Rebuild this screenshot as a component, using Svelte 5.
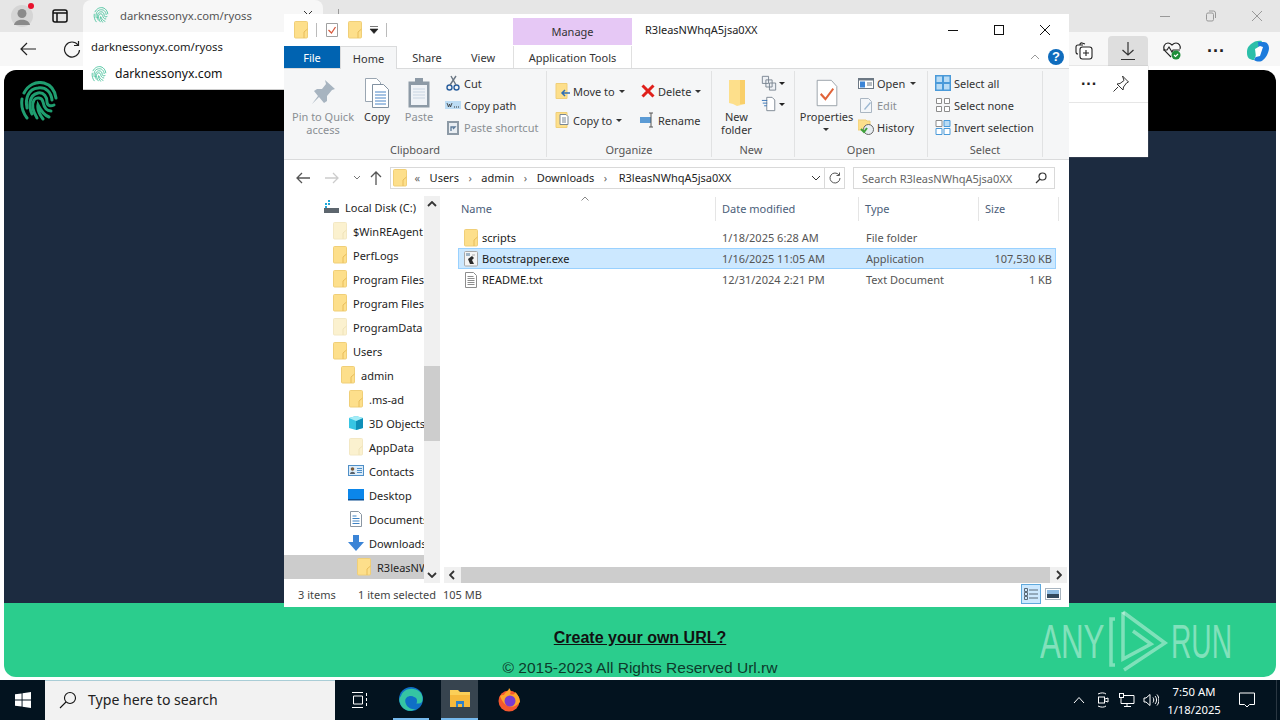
<script>
  const tree = [
    { label: 'Local Disk (C:)', depth: 0, icon: 'disk' },
    { label: '$WinREAgent', depth: 1, icon: 'pale' },
    { label: 'PerfLogs', depth: 1, icon: 'folder' },
    { label: 'Program Files', depth: 1, icon: 'folder' },
    { label: 'Program Files', depth: 1, icon: 'folder' },
    { label: 'ProgramData', depth: 1, icon: 'pale' },
    { label: 'Users', depth: 1, icon: 'folder' },
    { label: 'admin', depth: 2, icon: 'folder' },
    { label: '.ms-ad', depth: 3, icon: 'folder' },
    { label: '3D Objects', depth: 3, icon: 'cube' },
    { label: 'AppData', depth: 3, icon: 'pale' },
    { label: 'Contacts', depth: 3, icon: 'contacts' },
    { label: 'Desktop', depth: 3, icon: 'desktop' },
    { label: 'Documents', depth: 3, icon: 'doc' },
    { label: 'Downloads', depth: 3, icon: 'down' },
    { label: 'R3leasNWhqA5jsa0XX', depth: 4, icon: 'folder', active: true }
  ];

  const files = [
    { name: 'scripts', date: '1/18/2025 6:28 AM', type: 'File folder', size: '', icon: 'folder' },
    { name: 'Bootstrapper.exe', date: '1/16/2025 11:05 AM', type: 'Application', size: '107,530 KB', icon: 'exe', selected: true },
    { name: 'README.txt', date: '12/31/2024 2:21 PM', type: 'Text Document', size: '1 KB', icon: 'txt' }
  ];
</script>

{#snippet folder(pale = false)}
  <svg class="ico" width="16" height="18" viewBox="0 0 16 18">
    <rect x="1.500" y="0.500" width="13" height="16.500" rx="1" fill={pale ? '#fbf1cf' : '#fddf8b'} stroke={pale ? '#f3e8c4' : '#f0cf78'} />
    <path d="M11 17v-6l3.500-3" stroke={pale ? '#efe2b8' : '#e8bd5a'} fill="none" />
  </svg>
{/snippet}

{#snippet icon(name)}
  {#if name === 'folder'}{@render folder()}
  {:else if name === 'pale'}{@render folder(true)}
  {:else if name === 'disk'}
    <svg class="ico" width="16" height="16" viewBox="0 0 16 16"><rect x="0" y="9" width="15" height="5" fill="#5d666e" /><rect x="1" y="4" width="2" height="2" fill="#1fa7d8" /><rect x="4" y="4" width="2" height="2" fill="#1fa7d8" /><rect x="1" y="7" width="2" height="2" fill="#1fa7d8" /><rect x="4" y="1" width="2" height="2" fill="#1fa7d8" /></svg>
  {:else if name === 'cube'}
    <svg class="ico" width="16" height="16" viewBox="0 0 16 16"><path d="M1 3l7-2 7 2v10l-7 2-7-2z" fill="#37c5e3" /><path d="M8 6l7-3v10l-7 2z" fill="#0f8fb8" /><path d="M1 3l7-2 7 2-7 3z" fill="#a5ecf6" /></svg>
  {:else if name === 'contacts'}
    <svg class="ico" width="16" height="16" viewBox="0 0 16 16"><rect x="0.500" y="2.500" width="15" height="10" fill="#dcecf9" stroke="#4f8fc7" /><circle cx="4.500" cy="6" r="1.800" fill="#7a5a3a" /><path d="M2 11c0-3 5-3 5 0z" fill="#55606a" /><path d="M9 5.500h5M9 7.500h5M9 9.500h5" stroke="#4f8fc7" /></svg>
  {:else if name === 'desktop'}
    <svg class="ico" width="16" height="16" viewBox="0 0 16 16"><rect x="0" y="2" width="16" height="11" fill="#0b86ea" /><rect x="0" y="12" width="16" height="1.500" fill="#0c4f91" /></svg>
  {:else if name === 'doc'}
    <svg class="ico" width="16" height="16" viewBox="0 0 16 16"><path d="M2.500 0.500h8l3 3v12h-11z" fill="#fff" stroke="#8a96a2" /><path d="M4.500 5h4M4.500 7.500h7M4.500 10h7M4.500 12.500h7" stroke="#3f83c4" /></svg>
  {:else if name === 'down'}
    <svg class="ico" width="16" height="16" viewBox="0 0 16 16"><path d="M5 0h6v7h5l-8 9-8-9h5z" fill="#3b84d6" /></svg>
  {:else if name === 'exe'}
    <svg class="ico" width="16" height="16" viewBox="0 0 16 16"><rect x="1.500" y="0.500" width="13" height="14.500" rx="1" fill="#f4f4f4" stroke="#a8a8a8" /><rect x="3" y="2" width="4" height="3" fill="#9fb4c6" /><path d="M5 8l4-3 2 2-2 2 2 4H7z" fill="#2c2c2c" /><path d="M9 3h3v2H9z" fill="#d0d0d0" /></svg>
  {:else if name === 'txt'}
    <svg class="ico" width="16" height="16" viewBox="0 0 16 16"><path d="M2.500 0.500h8l3 3v12h-11z" fill="#fff" stroke="#8d8d8d" /><path d="M4.500 4.500h6M4.500 6.500h7M4.500 8.500h7M4.500 10.500h7M4.500 12.500h7" stroke="#8d8d8d" /></svg>
  {/if}
{/snippet}

{#snippet print(size, color = '#1f9e70', weight = 2.5)}
  <svg width={size} height={size} viewBox="0 0 40 40" fill="none" stroke={color} stroke-width={weight} stroke-linecap="round">
    <path d="M5 12C9 4 17 0 25 2c7 2 11 8 12 15" />
    <path d="M3 18c-1 7 1 14 5 19" />
    <path d="M8 27c-2-9 1-19 11-20 8-1 13 4 14 12" />
    <path d="M13 33c-3-6-4-19 6-21 6-1 9 4 9 9 0 3 3 5 7 3" />
    <path d="M18 37c-3-5-6-13-3-18 2-3 8-3 9 2 1 5 3 9 8 9" />
    <path d="M24 38c-3-4-6-9-5-14 3 6 6 10 11 12" />
  </svg>
{/snippet}

<div class="screen">
  <div class="browser">
    <div class="tabbar">
      <div class="profile">
        <svg width="24" height="24" viewBox="0 0 24 24"><circle cx="12" cy="12" r="11" fill="#d5d5d5" /><circle cx="12" cy="9.500" r="4.500" fill="#8a8a8a" /><path d="M4 21c1-7 15-7 16 0z" fill="#8a8a8a" /></svg>
        <span class="dot"></span>
      </div>
      <svg class="tabs-ico" width="16" height="16" viewBox="0 0 16 16" fill="none" stroke="#111" stroke-width="1.500"><rect x="1" y="2" width="14" height="12" rx="2" /><path d="M1 5h14M5 5v9" /></svg>
      <div class="tab">
        {@render print(16, '#5cc9a7')}
        <span>darknessonyx.com/ryoss</span>
        <svg class="tab-x" width="10" height="10" viewBox="0 0 10 10" stroke="#333"><path d="M1 1l8 8M9 1L1 9" /></svg>
      </div>
      <i class="tab-sep"></i>
      <div class="winbtns">
        <svg width="12" height="12" viewBox="0 0 12 12"><path d="M1 6.500h10" stroke="#999" /></svg>
        <svg width="12" height="12" viewBox="0 0 12 12" fill="none" stroke="#999"><rect x="1.500" y="3" width="7" height="8" rx="1.500" /><path d="M4 1h4.500a2 2 0 0 1 2 2v5" /></svg>
        <svg width="12" height="12" viewBox="0 0 12 12" stroke="#999"><path d="M1 1l10 10M11 1L1 11" /></svg>
      </div>
    </div>
    <div class="toolbar">
      <svg class="back" width="18" height="18" viewBox="0 0 18 18" fill="none" stroke="#222" stroke-width="1.200"><path d="M17 9H2M8 3L2 9l6 6" /></svg>
      <svg class="reload" width="18" height="18" viewBox="0 0 18 18" fill="none" stroke="#222" stroke-width="1.200"><path d="M15 5a7.500 7.500 0 1 0 1.500 5" /><path d="M15.500 1v4.500H11" /></svg>
      <div class="tools">
        <span class="tool">
          <svg width="18" height="18" viewBox="0 0 18 18" fill="none" stroke="#222" stroke-width="1.100"><path d="M5 3V2.500A1.500 1.500 0 0 1 7 1l3 1M3 12a2 2 0 0 1-2-2V5a2 2 0 0 1 2-2h5" /><rect x="5" y="5" width="12" height="12" rx="2.500" fill="#fff" /><path d="M11 8v6M8 11h6" /></svg>
        </span>
        <span class="tool">
          <span class="dl">
            <svg width="18" height="20" viewBox="0 0 18 20" fill="none" stroke="#333" stroke-width="1.200"><path d="M9 1v13M3.500 9L9 14l5.500-5M2 18.500h14" /></svg>
          </span>
        </span>
        <span class="tool">
          <svg width="20" height="20" viewBox="0 0 20 20" fill="none" stroke="#222" stroke-width="1.100"><path d="M9 16L3 10C0 6 3 2 6 2c2 0 3 1 4 2 1-1 2-2 4-2 3 0 5 3 4 6" /><path d="M1 9h4l2-3 3 5 1-2h7" /><circle cx="14" cy="14" r="4.500" fill="#1f8f3a" stroke="none" /><path d="M12 14l1.500 1.500L16 13" stroke="#fff" /></svg>
        </span>
        <span class="tool dots">···</span>
        <span class="tool last">
          <svg width="24" height="24" viewBox="0 0 24 24"><path d="M5 5c3-3 8-4 11-3l-4 9-4 10c-4 0-7-2-7-7s1-6 4-9z" fill="#2bbfa9" /><path d="M12 3h6c3 0 5 3 5 6s-2 9-6 12c-2 2-6 2-9 0l5-9z" fill="#1c7bdc" /><path d="M9 10l5-3 3 1-3 9-4 1z" fill="#fff" /></svg>
        </span>
      </div>
    </div>
    <div class="page">
      <header class="site-head">{@render print(40, '#1f9e70', 3)}</header>
      <main class="site-body"></main>
      <footer class="site-foot">
        <a href="#top">Create your own URL?</a>
        <p>© 2015-2023 All Rights Reserved Url.rw</p>
      </footer>
    </div>
    <div class="taskbar">
      <div class="start">
        <svg width="16" height="16" viewBox="0 0 17 17" fill="#fff"><path d="M0 2.500l7-1v6.500H0zM8 1.300L17 0v8H8zM0 9h7v6.500l-7-1zM8 9h9v8l-9-1.300z" /></svg>
      </div>
      <div class="search">
        <svg width="18" height="18" viewBox="0 0 18 18" fill="none" stroke="#111" stroke-width="1.100"><circle cx="11" cy="7" r="5.500" /><path d="M7 11l-6 6" /></svg>
        <span>Type here to search</span>
      </div>
      <div class="task first">
        <svg width="16" height="18" viewBox="0 0 16 18" fill="none" stroke="#fff"><path d="M0 1.500h11M0 16.500h11M1.500 5h9v8h-9zM14.500 2v3M14.500 7v3M14.500 12v3" /></svg>
      </div>
      <div class="task running edge">
        <svg width="24" height="24" viewBox="0 0 24 24"><circle cx="12" cy="12" r="12" fill="#0f6fc6" /><path d="M2 9C4 2 14-1 21 5c3 3 3 8 2 10-2 2-6 2-8 0 2-2 1-6-3-6-5 0-7 4-5 8 1 3 5 6 10 5-6 4-14 1-16-6-1-2-1-5 1-7z" fill="#35c4a3" /><circle cx="14" cy="14" r="4" fill="#0f6fc6" /></svg>
      </div>
      <div class="task running active">
        <svg width="22" height="20" viewBox="0 0 22 20"><path d="M1 1h8l2 2h10v15H1z" fill="#fbcf58" /><path d="M1 6h20v12H1z" fill="#f6b93c" /><path d="M7 12h8v6h-2v-3H9v3H7z" fill="#2f80c9" /></svg>
      </div>
      <div class="task">
        <svg width="24" height="24" viewBox="0 0 24 24"><circle cx="12" cy="13" r="10.500" fill="#f5582f" /><path d="M3 8c4 12 14 14 20 6 0-5-3-8-5-10 0 3-3 3-5 2 1-2 1-4-1-6 0 3-4 4-5 7-2 0-3 0-4 1z" fill="#ffa52b" /><circle cx="13" cy="13" r="5.500" fill="#7a3bd1" /></svg>
      </div>
      <div class="tray">
        <span class="ti"><svg width="12" height="8" viewBox="0 0 12 8" fill="none" stroke="#fff"><path d="M1 7l5-5.500L11 7" /></svg></span>
        <span class="ti"><svg width="14" height="16" viewBox="0 0 14 16" fill="none" stroke="#fff"><rect x="2.500" y="5" width="6" height="6" /><path d="M9 7l3-1v4l-3-1M2 2c3-1.500 6-1.500 8 0M2 14c3 1.500 6 1.500 8 0" /></svg></span>
        <span class="ti"><svg width="16" height="14" viewBox="0 0 16 14" fill="none" stroke="#fff"><path d="M2 2.500h13v8H2zM8 10.500V13M5 13.500h7" /><rect x="0.500" y="0.500" width="4" height="4" fill="#03131f" /></svg></span>
        <span class="ti"><svg width="16" height="14" viewBox="0 0 16 14" fill="none" stroke="#fff"><path d="M1 5h2l4-3.500v11L3 9H1zM10 4.500c1 1.500 1 3.500 0 5M12 3c2 2 2 6 0 8M14 1.500c2.500 3 2.500 8 0 11" /></svg></span>
        <div class="clock"><span>7:50 AM</span><span>1/18/2025</span></div>
        <svg class="notif" width="16" height="16" viewBox="0 0 16 16" fill="none" stroke="#fff"><path d="M0.500 1h15v11.500h-5L8 15l-2.500-2.500h-5z" /></svg>
        <i class="peek"></i>
      </div>
    </div>
  </div>

  <div class="omnibox">
    <p class="url">darknessonyx.com/ryoss</p>
    <p class="site">{@render print(16, '#5cc9a7')}<span>darknessonyx.com</span></p>
  </div>

  <div class="dl-popup">
    <div class="dl-head">
      <span class="dots small">···</span>
      <svg width="18" height="18" viewBox="0 0 18 18" fill="none" stroke="#333"><path d="M10.500 1l6 6-2 1-3 4-.5 3-6-6 3-.5 4-3zM6 12l-4.500 4.500" /></svg>
    </div>
  </div>

  <svg class="watermark" width="200" height="70" viewBox="0 0 200 70">
    <text x="0" y="0" transform="translate(0 51) scale(.98 1.520)">ANY</text>
    <text x="0" y="0" transform="translate(131 51) scale(.88 1.520)">RUN</text>
    <g fill="none" stroke="#fff" stroke-opacity=".4" stroke-width="3.500">
      <path d="M75 12h-4v46h4" />
      <path d="M83 5l42 31-41 27" />
      <path d="M83 5v47l28-15-18-13" />
    </g>
  </svg>

  <section class="explorer">
    <div class="titlebar">
      <div class="qat">
        {@render folder()}
        <i class="sep"></i>
        <svg width="16" height="16" viewBox="0 0 16 16"><path d="M2.500 1.500h11v13h-11z" fill="#fff" stroke="#a0a0a0" /><path d="M4.500 8l3 3 4-6" fill="none" stroke="#d9583b" stroke-width="1.300" /></svg>
        {@render folder()}
        <svg class="qat-drop" width="10" height="8" viewBox="0 0 10 8"><path d="M1 0.500h8M1 3h8L5 7.500z" fill="#222" stroke="#222" stroke-width=".6" /></svg>
        <i class="sep"></i>
      </div>
      <div class="manage">Manage</div>
      <div class="wintitle">R3leasNWhqA5jsa0XX</div>
      <div class="wbtns">
        <svg width="12" height="12" viewBox="0 0 12 12"><path d="M1 6.500h10" stroke="#111" /></svg>
        <svg width="12" height="12" viewBox="0 0 12 12"><rect x="1.500" y="1.500" width="9" height="9" fill="none" stroke="#111" /></svg>
        <svg width="12" height="12" viewBox="0 0 12 12" stroke="#111"><path d="M1 1l10 10M11 1L1 11" /></svg>
      </div>
    </div>
    <div class="tabrow">
      <div class="rtab file">File</div>
      <div class="rtab home">Home</div>
      <div class="rtab share">Share</div>
      <div class="rtab view">View</div>
      <div class="rtab apptools">Application Tools</div>
      <div class="tabright">
        <svg width="10" height="6" viewBox="0 0 10 6" fill="none" stroke="#999"><path d="M1 5l4-4 4 4" /></svg>
        <span class="help">?</span>
      </div>
    </div>
    <div class="ribbon">
      <div class="group g-clip">
        <div class="gbody">
          <div class="big pin">
            <svg width="32" height="32" viewBox="0 0 32 32"><path d="M18 3l10 9-3 1-5 6 0 5-3 2-5-6-7 7 6-8-4-5 3-2 5 0 4-5z" fill="#a7b4c0" /></svg>
            <span>Pin to Quick<br />access</span>
          </div>
          <div class="big copy">
            <svg width="26" height="32" viewBox="0 0 26 32"><path d="M1.500 1.500h11l4 4v19h-15z" fill="#fff" stroke="#9aa6b2" /><path d="M8.500 7.500h11l5 5v18h-16z" fill="#fff" stroke="#8191a1" /><path d="M11 15h11M11 18h11M11 21h11M11 24h11M11 27h11" stroke="#4a85c6" /></svg>
            <span>Copy</span>
          </div>
          <div class="big paste">
            <svg width="24" height="32" viewBox="0 0 24 32"><rect x="1.500" y="4.500" width="21" height="26" fill="#8d9aa6" /><rect x="4" y="8" width="16" height="20" fill="#f0f3f7" /><path d="M6 12h12M6 15h12M6 18h12M6 21h12" stroke="#c9d5e2" /><rect x="8" y="1" width="8" height="5" fill="#8d9aa6" /></svg>
            <span>Paste</span>
          </div>
          <div class="smalls">
            <div class="sm"><svg width="16" height="16" viewBox="0 0 16 16" fill="none" stroke="#2a5f9e" stroke-width="1.400"><circle cx="4.500" cy="12.500" r="2.500" /><circle cx="11.500" cy="12.500" r="2.500" /><path d="M5 10L11 1M11 10L6 1" stroke="#6a7683" /></svg>Cut</div>
            <div class="sm"><svg width="16" height="16" viewBox="0 0 16 16"><rect x="0" y="4" width="16" height="8" fill="#bcdcf4" /><path d="M2 6l1.500 4 1-3 1 3L7 6" fill="none" stroke="#333" stroke-width=".8" /><path d="M9 10h1M11 10h1M13 10h1" stroke="#333" /></svg>Copy path</div>
            <div class="sm dim"><svg width="16" height="16" viewBox="0 0 16 16"><rect x="2" y="2" width="12" height="14" fill="#8d9aa6" /><rect x="4" y="4" width="8" height="10" fill="#e9eef3" /><path d="M6 12V8h4L8 10" fill="none" stroke="#5d7b9a" stroke-width="1.300" /></svg>Paste shortcut</div>
          </div>
        </div>
        <div class="glabel">Clipboard</div>
      </div>
      <div class="group g-org">
        <div class="gbody">
          <div class="pair">
            <div class="sm">
              <svg width="16" height="16" viewBox="0 0 16 16"><path d="M1 0.500h11v15H1z" fill="#fddf8b" stroke="#f0cf78" /><path d="M15 10H7M10 7l-3 3 3 3" fill="none" stroke="#2f6fb5" stroke-width="1.500" /></svg>
              Move to <b class="caret"></b>
            </div>
            <div class="sm">
              <svg width="16" height="16" viewBox="0 0 16 16"><path d="M1 0.500h11v15H1z" fill="#fddf8b" stroke="#f0cf78" /><path d="M5 2.500h6l2 2v8H5z" fill="#fff" stroke="#7a8794" /><path d="M7 6h4M7 8h4M7 10h4" stroke="#7a8794" /></svg>
              Copy to <b class="caret"></b>
            </div>
          </div>
          <div class="pair second">
            <div class="sm">
              <svg width="16" height="16" viewBox="0 0 16 16" stroke="#e0201b" stroke-width="3"><path d="M2.500 2.500l11 11M13.500 2.500l-11 11" /></svg>
              Delete <b class="caret"></b>
            </div>
            <div class="sm">
              <svg width="16" height="16" viewBox="0 0 16 16"><rect x="0" y="5" width="11" height="6" fill="#5b9bd5" /><path d="M11 1v14M9 1h4M9 15h4" stroke="#555" fill="none" /></svg>
              Rename
            </div>
          </div>
        </div>
        <div class="glabel">Organize</div>
      </div>
      <div class="group g-new">
        <div class="gbody">
          <div class="big newf">
            <svg width="22" height="28" viewBox="0 0 22 28"><path d="M3 1h16v24l-8 2-4-2-4-1z" fill="#fddf8b" /><path d="M14 1h5v24h-5z" fill="#f9cf6a" /></svg>
            <span>New<br />folder</span>
          </div>
          <div class="newsm">
            <span><svg width="16" height="18" viewBox="0 0 18 18" fill="#eef1f5" stroke="#75818d"><path d="M1.500 1.500h7v8h-7zM5.500 5.500h7v8h-7zM9.500 9h7v8h-7z" /></svg><b class="caret dark"></b></span>
            <span><svg width="16" height="18" viewBox="0 0 18 18" fill="#fff" stroke="#75818d"><path d="M6.500 1.500h6l3 3v12h-9z" /><path d="M1 5h6M2 8h5M3.500 11h3" stroke="#2f6fb5" /></svg><b class="caret dark"></b></span>
          </div>
        </div>
        <div class="glabel">New</div>
      </div>
      <div class="group g-open">
        <div class="gbody">
          <div class="big props">
            <svg width="22" height="28" viewBox="0 0 28 32" preserveAspectRatio="none"><path d="M1.500 1.500h18l7 7v22h-25z" fill="#fff" stroke="#8a939c" /><path d="M6 17l6 6 10-12" fill="none" stroke="#e1643a" stroke-width="2.600" /></svg>
            <span>Properties</span>
            <b class="caret"></b>
          </div>
          <div class="smalls">
            <div class="sm"><svg width="16" height="16" viewBox="0 0 16 16"><rect x="0.500" y="3.500" width="15" height="10" fill="#fff" stroke="#6c7884" /><rect x="0.500" y="3.500" width="15" height="2" fill="#6c7884" /><rect x="2" y="6.500" width="5" height="6" fill="#3b84d6" /><path d="M9 8h5M9 10h5" stroke="#6c7884" /></svg>Open <b class="caret gap"></b></div>
            <div class="sm dim"><svg width="16" height="16" viewBox="0 0 16 16"><path d="M2.500 1.500h8l3 3v11h-11z" fill="#f3f6f9" stroke="#aab6c2" /><path d="M6 12l6-7 1 1-6 7z" fill="#9cb8d2" /></svg>Edit</div>
            <div class="sm"><svg width="16" height="16" viewBox="0 0 16 16"><path d="M0 1h8l1 1h3v9H0z" fill="#fddf8b" stroke="#f0cf78" /><circle cx="10.500" cy="10.500" r="5" fill="#e8edf1" stroke="#666" /><path d="M3 10l3 3 3-4" stroke="#3da13a" stroke-width="2" fill="none" /></svg>History</div>
          </div>
        </div>
        <div class="glabel">Open</div>
      </div>
      <div class="group g-sel">
        <div class="gbody">
          <div class="smalls">
            <div class="sm"><svg width="16" height="16" viewBox="0 0 16 16"><rect width="16" height="16" fill="#4a9ad9" /><path d="M1.500 1.500h5.500v5.500H1.500zM9 1.500h5.500v5.500H9zM1.500 9h5.500v5.500H1.500zM9 9h5.500v5.500H9z" fill="#b9dcf5" /></svg>Select all</div>
            <div class="sm"><svg width="16" height="16" viewBox="0 0 16 16" fill="#fff" stroke="#8c8c8c"><path d="M1.500 1.500h5v5h-5zM9.500 1.500h5v5h-5zM1.500 9.500h5v5h-5zM9.500 9.500h5v5h-5z" /></svg>Select none</div>
            <div class="sm"><svg width="16" height="16" viewBox="0 0 16 16"><path d="M1 9.500h6v6H1zM9 9.500h6v6H9z" fill="#fff" stroke="#4a9ad9" /><path d="M9 1.500h6v6H9z" fill="#b9dcf5" stroke="#4a9ad9" /><path d="M1 1.500h6v6H1z" fill="#fff" stroke="#8c8c8c" /></svg>Invert selection</div>
          </div>
        </div>
        <div class="glabel">Select</div>
      </div>
    </div>
    <div class="addressrow">
      <svg class="nav" width="14" height="12" viewBox="0 0 14 12" fill="none" stroke="#555" stroke-width="1.300"><path d="M14 6H1M6 1L1 6l5 5" /></svg>
      <svg class="nav" width="14" height="12" viewBox="0 0 14 12" fill="none" stroke="#ccc" stroke-width="1.300"><path d="M0 6h13M8 1l5 5-5 5" /></svg>
      <svg class="nav small" width="8" height="6" viewBox="0 0 8 6" fill="none" stroke="#777"><path d="M1 1l3 3 3-3" /></svg>
      <svg class="nav up" width="12" height="14" viewBox="0 0 12 14" fill="none" stroke="#555" stroke-width="1.300"><path d="M6 14V1M1 6l5-5 5 5" /></svg>
      <div class="address">
        {@render folder()}
        <span class="crumb chev first">«</span>
        <span class="crumb">Users</span><span class="chev">›</span>
        <span class="crumb">admin</span><span class="chev">›</span>
        <span class="crumb">Downloads</span><span class="chev">›</span>
        <span class="crumb last-crumb">R3leasNWhqA5jsa0XX</span>
        <svg class="addr-drop" width="10" height="6" viewBox="0 0 10 6" fill="none" stroke="#333"><path d="M1 1l4 4 4-4" /></svg>
      </div>
      <div class="refresh">
        <svg width="12" height="12" viewBox="0 0 12 12" fill="none" stroke="#555"><path d="M10 3a5 5 0 1 0 1 3M10.500 0.500V3.500H7.500" /></svg>
      </div>
      <div class="searchbox">
        <span>Search R3leasNWhqA5jsa0XX</span>
        <svg width="12" height="12" viewBox="0 0 12 12" fill="none" stroke="#333" stroke-width="1.200"><circle cx="7.500" cy="4.500" r="3.500" /><path d="M5 7l-4 4" /></svg>
      </div>
    </div>
    <div class="content">
      <div class="treewrap">
        <div class="tree">
          {#each tree as t}
            <div class="node" class:active={t.active} style="padding-left: {40 + t.depth * 8}px">
              {@render icon(t.icon)}
              <span>{t.label}</span>
            </div>
          {/each}
        </div>
        <div class="vscroll">
          <svg width="10" height="6" viewBox="0 0 10 6" fill="none" stroke="#333" stroke-width="1.800"><path d="M1 5l4-4 4 4" /></svg>
          <div class="vtrack"><i></i></div>
          <svg width="10" height="6" viewBox="0 0 10 6" fill="none" stroke="#333" stroke-width="1.800"><path d="M1 1l4 4 4-4" /></svg>
        </div>
      </div>
      <div class="listpane">
        <div class="sortmark"><svg width="8" height="5" viewBox="0 0 8 5" fill="none" stroke="#888"><path d="M0.500 4.500L4 1l3.500 3.500" /></svg></div>
        <div class="row head">
          <span class="c-name">Name</span>
          <span class="c-date">Date modified</span>
          <span class="c-type">Type</span>
          <span class="c-size">Size</span>
        </div>
        <div class="rows">
          {#each files as f}
            <div class="row file-row" class:selected={f.selected}>
              <span class="c-name named">{@render icon(f.icon)}<b>{f.name}</b></span>
              <span class="c-date">{f.date}</span>
              <span class="c-type">{f.type}</span>
              <span class="c-size">{f.size}</span>
            </div>
          {/each}
        </div>
        <div class="hscroll">
          <svg width="6" height="10" viewBox="0 0 6 10" fill="none" stroke="#333" stroke-width="1.800"><path d="M5 1L1 5l4 4" /></svg>
          <i></i>
          <svg width="6" height="10" viewBox="0 0 6 10" fill="none" stroke="#333" stroke-width="1.800"><path d="M1 1l4 4-4 4" /></svg>
        </div>
      </div>
    </div>
    <div class="status">
      <span class="s1">3 items</span>
      <span class="s2">1 item selected</span>
      <span class="s3">105 MB</span>
      <div class="views">
        <span class="v on"><svg width="16" height="14" viewBox="0 0 16 14" fill="none" stroke="#5a6a78"><path d="M1.500 1.500h3v3h-3zM1.500 5.500h3v3h-3zM1.500 9.500h3v3h-3zM6 3h9M6 7h9M6 11h9" /></svg></span>
        <span class="v"><svg width="16" height="14" viewBox="0 0 16 14"><rect x="0.500" y="1.500" width="15" height="11" fill="#fff" stroke="#a8b4bf" /><rect x="2" y="3" width="12" height="4" fill="#8fbce2" /><rect x="2" y="7" width="12" height="4" fill="#34495c" /></svg></span>
      </div>
    </div>
  </section>
</div>

<style>
  :global(body) {
    margin: 0;
    overflow: hidden;
    background: #fff;
  }
  .screen {
    position: relative;
    width: 1280px;
    height: 720px;
    overflow: hidden;
    font-family: 'Noto Sans', sans-serif;
    font-size: 11px;
    color: #1a1a1a;
  }
  .browser {
    display: flex;
    flex-direction: column;
    height: 100%;
  }
  svg {
    display: block;
    flex-shrink: 0;
  }

  .tabbar {
    height: 32px;
    background: #e6e6e6;
    display: flex;
    align-items: center;
    flex-shrink: 0;
  }
  .profile {
    position: relative;
    margin-left: 10px;
  }
  .dot {
    position: absolute;
    top: -1px;
    right: 0;
    width: 6px;
    height: 6px;
    border-radius: 50%;
    background: #e8112d;
  }
  .tabs-ico {
    margin-left: 18px;
  }
  .tab {
    margin-left: 15px;
    width: 240px;
    height: 32px;
    background: #f7f7f7;
    border-radius: 8px 8px 0 0;
    display: flex;
    align-items: center;
    gap: 11px;
    padding: 0 0 2px 10px;
    box-sizing: border-box;
    color: #555;
    font-size: 11.3px;
    white-space: nowrap;
  }
  .tab-x {
    margin-left: auto;
    margin-right: 10px;
  }
  .tab-sep {
    width: 1px;
    height: 14px;
    margin-left: 15px;
    background: #999;
  }
  .winbtns {
    margin-left: auto;
    display: flex;
    gap: 34px;
    padding-right: 17px;
  }

  .toolbar {
    height: 34px;
    background: #f7f7f7;
    display: flex;
    align-items: center;
    flex-shrink: 0;
    padding-left: 19px;
  }
  .reload {
    margin-left: 26px;
  }
  .tools {
    margin-left: auto;
    height: 100%;
    display: flex;
    padding-right: 2px;
  }
  .tool {
    width: 44px;
    display: flex;
    align-items: center;
    justify-content: center;
    padding-top: 3px;
    box-sizing: border-box;
  }
  .tool.last {
    width: 40px;
  }
  .dl {
    width: 40px;
    height: 30px;
    margin-top: 1px;
    background: #dedede;
    border-radius: 4px 4px 0 0;
    display: flex;
    align-items: center;
    justify-content: center;
  }
  .dots {
    font-size: 18px;
    font-weight: 700;
    line-height: 1;
    color: #222;
    font-family: 'Liberation Sans', sans-serif;
  }

  .page {
    flex: 1;
    display: flex;
    flex-direction: column;
    margin: 4px 4px 3px;
    border-radius: 12px;
    overflow: hidden;
    min-height: 0;
  }
  .site-head {
    height: 61px;
    background: #000;
    display: flex;
    align-items: center;
    padding-left: 15px;
    flex-shrink: 0;
  }
  .site-body {
    flex: 1;
    background: #1c2b40;
  }
  .site-foot {
    height: 74px;
    background: #2bcd8d;
    font-family: 'Liberation Sans', sans-serif;
    font-size: 16px;
    text-align: center;
    color: #0d3a2b;
    flex-shrink: 0;
    overflow: hidden;
  }
  .site-foot a {
    display: block;
    margin-top: 26px;
    font-weight: 700;
    color: #111;
    text-decoration: underline;
  }
  .site-foot p {
    margin: 12px 0 0;
    font-size: 15.55px;
  }

  .taskbar {
    height: 40px;
    background: #03131f;
    display: flex;
    align-items: stretch;
    flex-shrink: 0;
    color: #fff;
  }
  .start {
    width: 45px;
    display: flex;
    align-items: center;
    justify-content: center;
  }
  .search {
    width: 290px;
    background: #f2f2f2;
    border-top: 1px solid #a9cdd6;
    box-sizing: border-box;
    display: flex;
    align-items: center;
    gap: 11px;
    padding: 0 0 2px 14px;
    color: #222;
    font-size: 14.1px;
  }
  .task {
    width: 37px;
    margin-left: 12px;
    display: flex;
    align-items: center;
    justify-content: center;
    box-sizing: border-box;
  }
  .task.first {
    width: 50px;
    margin-left: 0;
  }
  .task.running {
    border-bottom: 2px solid #76b9ed;
  }
  .task.edge {
    width: 36px;
    margin-left: 8px;
  }
  .task.active {
    background: #37444f;
  }
  .tray {
    margin-left: auto;
    display: flex;
    align-items: center;
  }
  .ti {
    width: 24px;
    display: flex;
    justify-content: center;
  }
  .clock {
    display: flex;
    flex-direction: column;
    align-items: center;
    gap: 3px;
    font-size: 11.3px;
    margin-left: 1px;
    width: 60px;
  }
  .notif {
    margin-left: 15px;
  }
  .peek {
    width: 1px;
    height: 100%;
    margin: 0 3px 0 21px;
    background: #2a3742;
  }

  .omnibox {
    position: absolute;
    left: 83px;
    top: 32px;
    width: 201px;
    height: 58px;
    background: #fff;
    border-bottom: 1px solid #ccc;
    box-sizing: border-box;
    color: #222;
  }
  .url {
    margin: 7px 0 0 8px;
    font-size: 11.3px;
  }
  .site {
    margin: 11px 0 0 8px;
    display: flex;
    align-items: center;
    gap: 8px;
    font-size: 12.2px;
    color: #111;
  }

  .dl-popup {
    position: absolute;
    left: 1060px;
    top: 66px;
    width: 88px;
    height: 91px;
    background: #fff;
    box-shadow: 0 0 1px #999;
  }
  .dl-head {
    height: 37px;
    border-bottom: 1px solid #e6e6e6;
    display: flex;
    align-items: center;
    gap: 15px;
    padding-left: 21px;
    box-sizing: border-box;
  }
  .dots.small {
    font-size: 16px;
  }

  .watermark {
    position: absolute;
    left: 1040px;
    top: 607px;
  }
  .watermark text {
    font-family: 'Liberation Sans', sans-serif;
    font-size: 32px;
    fill: #fff;
    fill-opacity: 0.42;
  }

  .explorer {
    position: absolute;
    left: 284px;
    top: 14px;
    width: 785px;
    height: 593px;
    background: #fff;
    display: flex;
    flex-direction: column;
    color: #1e1e1e;
  }
  .titlebar {
    height: 32px;
    display: flex;
    position: relative;
    flex-shrink: 0;
  }
  .qat {
    display: flex;
    align-items: center;
    gap: 7px;
    padding-left: 9px;
    width: 229px;
    box-sizing: border-box;
  }
  .qat-drop {
    margin-left: -1px;
  }
  .sep {
    width: 1px;
    height: 14px;
    background: #bbb;
  }
  .manage {
    width: 119px;
    height: 27px;
    margin-top: 4px;
    background: #e6c8f5;
    display: flex;
    align-items: center;
    justify-content: center;
    color: #333;
  }
  .wintitle {
    margin-left: 13px;
    line-height: 32px;
    color: #222;
  }
  .wbtns {
    margin-left: auto;
    display: flex;
    gap: 34px;
    align-items: center;
    padding-right: 18px;
  }

  .tabrow {
    height: 22px;
    display: flex;
    align-items: stretch;
    position: relative;
    flex-shrink: 0;
  }
  .rtab {
    display: flex;
    align-items: center;
    justify-content: center;
    color: #333;
  }
  .rtab.file {
    width: 56px;
    background: #0063b1;
    color: #fff;
  }
  .rtab.home {
    width: 57px;
    background: #f5f6f7;
    border: 1px solid #dadbdc;
    border-bottom: 0;
    box-sizing: border-box;
    margin-bottom: -1px;
    position: relative;
    z-index: 1;
  }
  .rtab.share {
    width: 60px;
  }
  .rtab.view {
    width: 52px;
  }
  .rtab.apptools {
    margin-left: 4px;
    width: 119px;
    border: 1px solid #e0e0e0;
    border-width: 0 1px;
    box-sizing: border-box;
  }
  .tabright {
    margin-left: auto;
    display: flex;
    align-items: center;
    gap: 8px;
    padding-right: 5px;
  }
  .help {
    width: 16px;
    height: 16px;
    border-radius: 50%;
    background: #0f6cbd;
    color: #fff;
    font: 700 13px/16px 'Liberation Sans', sans-serif;
    text-align: center;
  }

  .ribbon {
    height: 92px;
    background: #f5f6f7;
    border-top: 1px solid #dadbdc;
    border-bottom: 1px solid #dadbdc;
    box-sizing: border-box;
    display: flex;
    flex-shrink: 0;
    color: #333;
  }
  .group {
    display: flex;
    flex-direction: column;
    border-right: 1px solid #e1e2e3;
    box-sizing: border-box;
    height: 86px;
    margin-top: 2px;
  }
  .g-clip { width: 263px; }
  .g-org { width: 165px; }
  .g-new { width: 83px; }
  .g-open { width: 133px; }
  .g-sel { width: 115px; }
  .gbody {
    flex: 1;
    display: flex;
    min-height: 0;
  }
  .glabel {
    text-align: center;
    height: 14px;
    line-height: 14px;
    color: #555;
  }
  .g-new .glabel {
    padding-right: 4px;
  }
  .big {
    display: flex;
    flex-direction: column;
    align-items: center;
    text-align: center;
    line-height: 13px;
    padding-top: 6px;
    box-sizing: border-box;
    flex-shrink: 0;
  }
  .big svg {
    height: 32px;
    margin-bottom: 1px;
  }
  .big.pin { width: 78px; color: #8a8f94; }
  .big.copy { width: 30px; margin-right: 5px; }
  .big.paste { width: 44px; margin-right: 4px; color: #8a8f94; }
  .big.newf { width: 49px; }
  .big.props { width: 63px; }
  .big.props svg { height: 28px; margin: 2px 0 3px; }
  .caret {
    display: inline-block;
    width: 0;
    height: 0;
    border: 3px solid transparent;
    border-top: 3px solid #333;
    border-bottom: 0;
    vertical-align: middle;
    margin-left: -1px;
  }
  .caret.gap { margin-left: 2px; }
  .big .caret { margin-top: 5px; }
  .smalls {
    display: flex;
    flex-direction: column;
    gap: 6px;
    padding-top: 4px;
  }
  .sm {
    display: flex;
    align-items: center;
    gap: 3px;
    height: 16px;
    white-space: nowrap;
  }
  .sm.dim {
    color: #8a8f94;
  }
  .pair {
    display: flex;
    flex-direction: column;
    gap: 13px;
    padding: 12px 0 0 8px;
    width: 84px;
    box-sizing: border-box;
  }
  .pair .sm { gap: 2px; }
  .pair .caret { margin-left: 2px; }
  .pair.second { padding-left: 9px; width: 80px; }
  .newsm {
    display: flex;
    flex-direction: column;
    gap: 3px;
    padding-top: 3px;
  }
  .newsm span { display: flex; align-items: center; gap: 2px; }
  .caret.dark { border-top-color: #222; margin-left: 0; }
  .g-sel .gbody { padding-left: 7px; }

  .addressrow {
    height: 36px;
    display: flex;
    align-items: center;
    flex-shrink: 0;
    padding-left: 12px;
    box-sizing: border-box;
  }
  .nav { margin-right: 15px; }
  .nav.small { margin-right: 13px; margin-left: -1px; }
  .nav.up { margin-left: -4px; margin-right: 8px; }
  .address {
    width: 435px;
    height: 22px;
    border: 1px solid #d9d9d9;
    box-sizing: border-box;
    display: flex;
    align-items: center;
    gap: 9.500px;
    padding: 0 0 1px 1px;
    color: #1e1e1e;
  }
  .first { margin-left: -3px; }
  .last-crumb { margin-left: 2px; }
  .chev { color: #666; }
  .addr-drop { margin-left: auto; margin-right: 3px; }
  .refresh {
    width: 20px;
    height: 22px;
    border: 1px solid #d9d9d9;
    border-left: 0;
    box-sizing: border-box;
    display: flex;
    align-items: center;
    justify-content: center;
  }
  .searchbox {
    width: 202px;
    height: 22px;
    margin-left: 8px;
    border: 1px solid #d9d9d9;
    box-sizing: border-box;
    display: flex;
    align-items: center;
    justify-content: space-between;
    padding: 0 7px 0 8px;
    color: #666;
    overflow: hidden;
    white-space: nowrap;
  }
  .searchbox span { overflow: hidden; width: 158px; }

  .content {
    flex: 1;
    display: flex;
    min-height: 0;
  }
  .treewrap {
    width: 156px;
    display: flex;
    flex-shrink: 0;
  }
  .tree {
    width: 140px;
    overflow: hidden;
    flex-shrink: 0;
    white-space: nowrap;
    margin-top: -1px;
  }
  .node {
    height: 24px;
    display: flex;
    align-items: center;
    gap: 5px;
    box-sizing: border-box;
  }
  .node.active {
    background: #cccccc;
  }
  .vscroll {
    width: 16px;
    background: #f0f0f0;
    display: flex;
    flex-direction: column;
    align-items: center;
    padding: 5px 0;
    box-sizing: border-box;
  }
  .vtrack {
    flex: 1;
    width: 100%;
    margin: 5px 0;
  }
  .vtrack i {
    display: block;
    height: 75px;
    margin-top: 154px;
    background: #cdcdcd;
  }

  .listpane {
    flex: 1;
    display: flex;
    flex-direction: column;
    position: relative;
    min-width: 0;
  }
  .sortmark {
    position: absolute;
    left: 141px;
    top: 0;
  }
  .row {
    display: grid;
    grid-template-columns: 258px 143px 120px 77px;
    align-items: center;
    box-sizing: border-box;
  }
  .row.head {
    height: 25px;
    padding-left: 18px;
    color: #4c607a;
    grid-template-columns: 258px 143px 120px 80px;
    flex-shrink: 0;
  }
  .row.head span {
    height: 24px;
    line-height: 24px;
    border-right: 1px solid #e5e5e5;
    box-sizing: border-box;
  }
  .row.head .c-name {
    padding-left: 3px;
  }
  .row.head .c-date, .row.head .c-type, .row.head .c-size {
    padding-left: 6px;
  }
  .rows {
    flex: 1;
    padding: 6px 0 0 18px;
  }
  .file-row {
    height: 21px;
    width: 598px;
    border: 1px solid transparent;
    color: #555;
  }
  .file-row.selected {
    background: #cce8ff;
    border-color: #99d1ff;
  }
  .file-row .c-date {
    padding-left: 5px;
  }
  .file-row .c-type {
    padding-left: 6px;
  }
  .c-size {
    text-align: right;
    padding-right: 5px;
  }
  .head .c-size { text-align: left; }
  .named {
    display: flex;
    align-items: center;
    gap: 3px;
    padding-left: 4px;
  }
  .named b {
    font-weight: 400;
    color: #1a1a1a;
  }
  .hscroll {
    height: 16px;
    margin: 0 2px 0 4px;
    background: #f0f0f0;
    display: flex;
    align-items: center;
    justify-content: space-between;
    padding: 0 5px;
    flex-shrink: 0;
  }
  .hscroll i {
    height: 16px;
    flex: 1;
    margin: 0 6px;
    background: #cdcdcd;
  }

  .status {
    height: 24px;
    display: flex;
    align-items: center;
    flex-shrink: 0;
    padding: 0 0 2px 14px;
    box-sizing: border-box;
    color: #444;
    position: relative;
  }
  .s1 { width: 60px; }
  .s2 { width: 85px; }
  .views {
    margin-left: auto;
    display: flex;
    gap: 2px;
    padding-right: 6px;
  }
  .v {
    width: 20px;
    height: 20px;
    display: flex;
    align-items: center;
    justify-content: center;
    box-sizing: border-box;
  }
  .v.on {
    background: #cce8ff;
    border: 1px solid #5fa9dd;
  }
</style>
